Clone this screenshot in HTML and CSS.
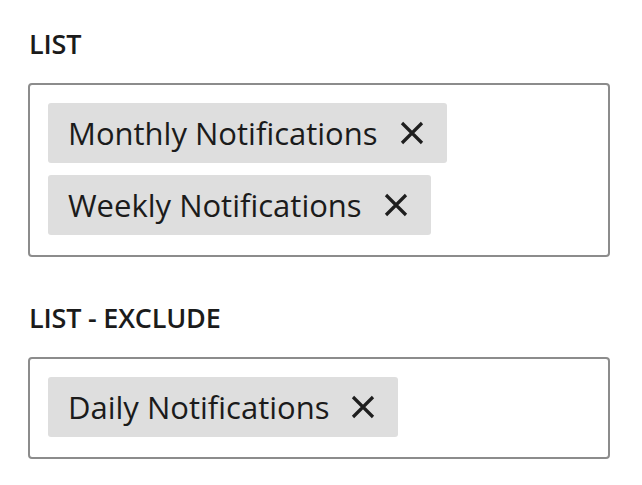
FILE: index.html
```html
<!DOCTYPE html>
<html>
<head>
<meta charset="utf-8">
<link rel="stylesheet" href="styles.css">
</head>
<body>
<div class="page">
  <section class="field">
    <div class="label">LIST</div>
    <div class="box">
      <div class="chip"><span class="chip-text">Monthly Notifications</span><svg class="x" viewBox="0 0 24 24"><path d="M2 2L22 22M22 2L2 22"/></svg></div>
      <div class="chip"><span class="chip-text">Weekly Notifications</span><svg class="x" viewBox="0 0 24 24"><path d="M2 2L22 22M22 2L2 22"/></svg></div>
    </div>
  </section>
  <section class="field">
    <div class="label">LIST - EXCLUDE</div>
    <div class="box">
      <div class="chip"><span class="chip-text">Daily Notifications</span><svg class="x" viewBox="0 0 24 24"><path d="M2 2L22 22M22 2L2 22"/></svg></div>
    </div>
  </section>
</div>
</body>
</html>
```
FILE: styles.css
```css
html, body { margin: 0; padding: 0; background: #fff; }
body { font-family: "Open Sans", "Noto Sans", sans-serif; color: #1b1b1b; }
.page { padding: 24px 32px 0 28px; display: flex; flex-direction: column; gap: 41px; }
.field { display: flex; flex-direction: column; gap: 19px; }
.label { font-weight: 600; font-size: 27px; line-height: 40px; padding-left: 1px; letter-spacing: -0.2px; }
.box { border: 2px solid #8c8c8c; border-radius: 4px; padding: 18px 18px 20px; display: flex; flex-direction: column; align-items: flex-start; gap: 12px; }
.chip { background: #dedede; border-radius: 3px; height: 60px; padding: 0 23px 0 20px; display: flex; align-items: center; gap: 22px; }
.chip-text { font-size: 31px; line-height: 60px; }
.x { width: 24px; height: 24px; fill: none; stroke: #1e1e1e; stroke-width: 3.2; }
```
